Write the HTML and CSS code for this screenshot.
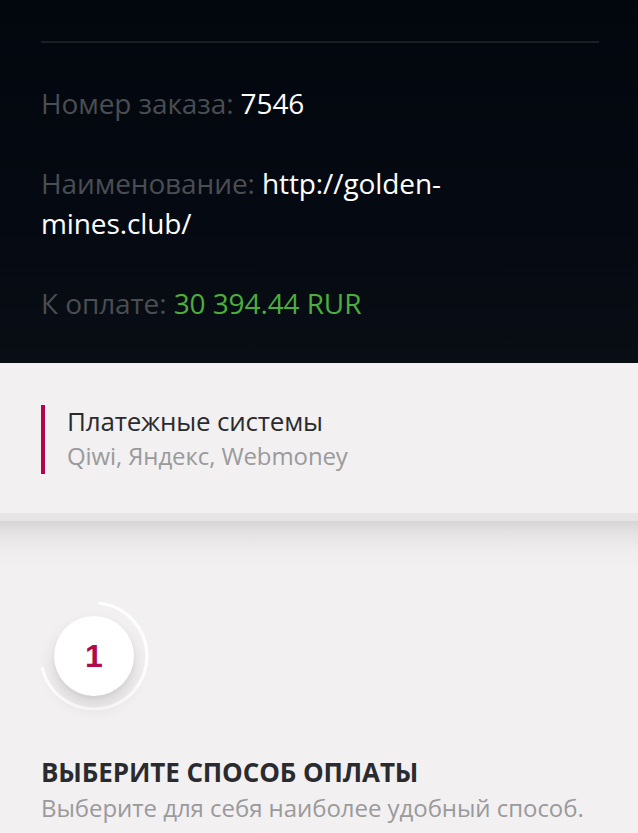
FILE: index.html
```html
<!DOCTYPE html>
<html lang="ru">
<head>
<meta charset="utf-8">
<title>Оплата</title>
<link rel="stylesheet" href="styles.css">
</head>
<body>
<section class="order">
  <div class="divider"></div>
  <p class="row"><span class="label">Номер заказа:</span> <span class="value">7546</span></p>
  <p class="row"><span class="label">Наименование:</span> <span class="value">http://golden-<br>mines.club/</span></p>
  <p class="row"><span class="label">К оплате:</span> <span class="amount">30 394.44 RUR</span></p>
</section>
<section class="systems">
  <div class="systems-inner">
    <div class="systems-title">Платежные системы</div>
    <div class="systems-list">Qiwi, Яндекс, Webmoney</div>
  </div>
</section>
<div class="band"></div>
<section class="step">
  <div class="step-badge">
    <svg class="step-arc" width="120" height="120" viewBox="0 0 120 120">
      <path d="M 65.5 7.3 A 53 53 0 1 1 8.4 72.5" fill="none" stroke="#ffffff" stroke-width="3" stroke-linecap="round"/>
    </svg>
    <div class="step-circle">1</div>
  </div>
  <h2 class="step-title">ВЫБЕРИТЕ СПОСОБ ОПЛАТЫ</h2>
  <p class="step-text">Выберите для себя наиболее удобный способ.</p>
</section>
</body>
</html>
```
FILE: styles.css
```css
* { box-sizing: border-box; }
html, body { margin: 0; padding: 0; }
body {
  font-family: "Open Sans", "Noto Sans", sans-serif;
  background: #f2f0f1;
  width: 638px;
  overflow: hidden;
}
.order {
  background: linear-gradient(180deg, #02060d 0%, #050a12 60%, #090e15 100%);
  padding: 41px 39px 1px 41px;
  height: 363px;
}
.divider {
  height: 2px;
  background: #1a1e25;
  margin-bottom: 40px;
}
.row {
  margin: 0 0 40px 0;
  font-size: 28px;
  line-height: 40px;
  font-weight: 400;
  letter-spacing: -0.1px;
}
.label { color: #4a4d52; }
.value { color: #ffffff; }
.amount { color: #4cae3c; }
.systems {
  background: #f2f0f1;
  height: 150px;
  padding: 40px 41px 0 41px;
}
.systems-inner {
  border-left: 4px solid #b0064c;
  padding-left: 22px;
  height: 69px;
}
.systems-title {
  font-size: 26px;
  line-height: 32px;
  color: #2b2b2e;
  margin-top: 2px;
  letter-spacing: -0.2px;
}
.systems-list {
  font-size: 24px;
  line-height: 36px;
  margin-top: 1px;
  color: #9a9a9c;
  letter-spacing: -0.1px;
}
.band {
  height: 8px;
  background: #e6e4e5;
}
.step {
  background: linear-gradient(180deg, #d7d5d6 0px, #e4e2e3 12px, #eeeced 28px, #f2f0f1 45px, #f2f0f1 100%);
  padding: 75px 41px 0 41px;
  height: 320px;
}
.step-badge {
  position: relative;
  width: 120px;
  height: 120px;
  margin-left: -7px;
}
.step-arc {
  position: absolute;
  left: 0;
  top: 0;
}
.step-circle {
  position: absolute;
  left: 20px;
  top: 20px;
  width: 80px;
  height: 80px;
  border-radius: 50%;
  background: #ffffff;
  box-shadow: 0 10px 18px rgba(0, 0, 0, 0.12), 0 2px 4px rgba(0, 0, 0, 0.05);
  display: flex;
  align-items: center;
  justify-content: center;
  font-family: "Liberation Sans", Arial, sans-serif;
  font-weight: 700;
  font-size: 32px;
  color: #ae0a4c;
}
.step-title {
  margin: 39px 0 0 0;
  font-size: 26px;
  line-height: 34px;
  font-weight: 700;
  color: #2a2b2f;
  letter-spacing: -0.1px;
}
.step-text {
  margin: 2px 0 0 0;
  font-size: 24px;
  line-height: 34px;
  color: #9a9a9c;
  letter-spacing: -0.05px;
}
```
